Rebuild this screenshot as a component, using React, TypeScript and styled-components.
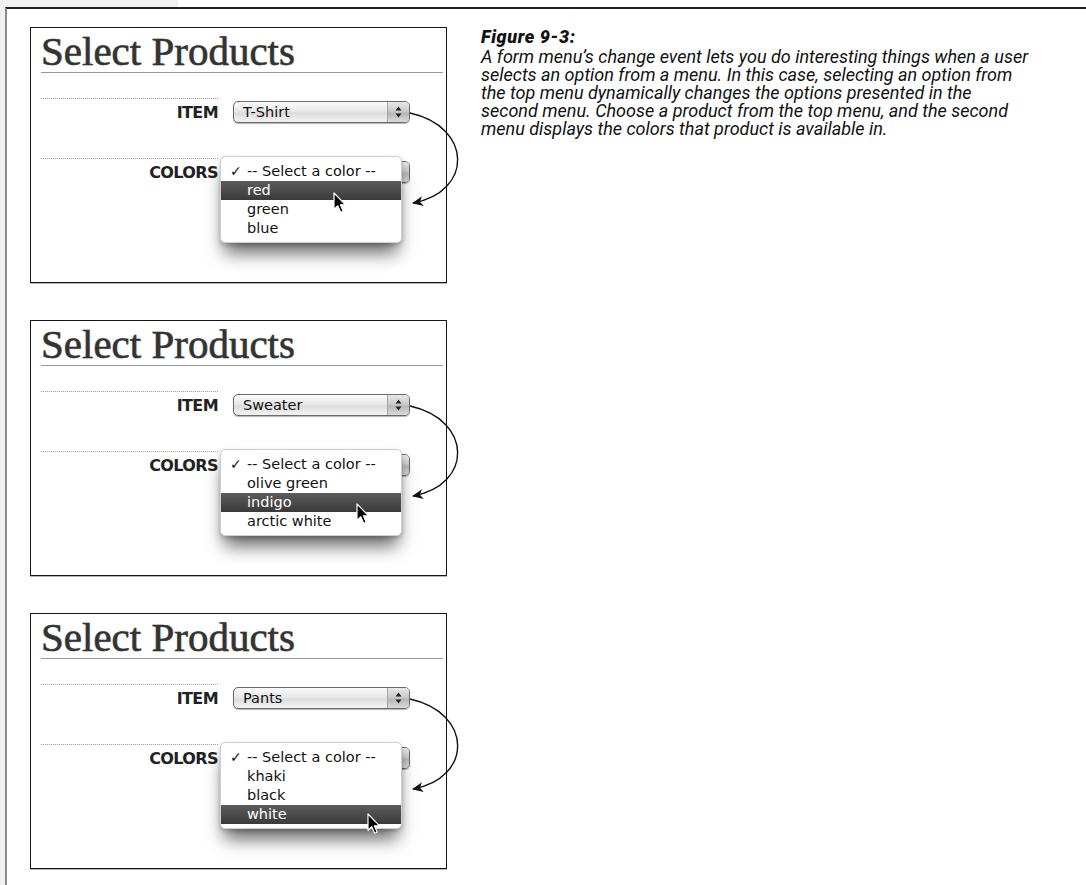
import styled, { createGlobalStyle } from "styled-components"

const GlobalStyle = createGlobalStyle`
  html, body {
    margin: 0;
    padding: 0;
    background: #fff;
  }
  body {
    font-family: "DejaVu Sans", sans-serif;
    color: #111;
  }
`

type Example = {
  item: string
  colors: string[]
  picked: number
  cursor: { x: number; y: number }
}

const examples: Example[] = [
  { item: "T-Shirt", colors: ["red", "green", "blue"], picked: 0, cursor: { x: 112, y: 35 } },
  { item: "Sweater", colors: ["olive green", "indigo", "arctic white"], picked: 1, cursor: { x: 135, y: 53 } },
  { item: "Pants", colors: ["khaki", "black", "white"], picked: 2, cursor: { x: 146, y: 70 } },
]

const Stepper = () => (
  <StepperBox>
    <svg width="7" height="12" viewBox="0 0 7 12">
      <polygon points="3.5,0.5 6.5,4.5 0.5,4.5" fill="#222" />
      <polygon points="0.5,7.5 6.5,7.5 3.5,11.5" fill="#222" />
    </svg>
  </StepperBox>
)

const Pointer = ({ x, y }: { x: number; y: number }) => (
  <Cursor $x={x} $y={y} width="14" height="22" viewBox="0 0 14 22">
    <path
      d="M1 1 L1 17.5 L4.8 13.8 L7.6 20.3 L10.2 19.2 L7.4 12.8 L12.6 12.8 Z"
      fill="#000"
      stroke="#fff"
      strokeWidth="1.2"
      strokeLinejoin="round"
    />
  </Cursor>
)

const Curve = () => (
  <CurveSvg width="1" height="1">
    <defs>
      <marker id="head" markerWidth="12" markerHeight="10" refX="10" refY="5" orient="auto" markerUnits="userSpaceOnUse">
        <path d="M0 0 L11 5 L0 10 L3 5 Z" fill="#111" />
      </marker>
    </defs>
    <path d="M379 85 C442 99 442 164 382 175" fill="none" stroke="#111" strokeWidth="1.4" markerEnd="url(#head)" />
  </CurveSvg>
)

const Shot = ({ ex }: { ex: Example }) => (
  <Panel>
    <Title>Select Products</Title>
    <Rows>
      <Row>
        <Label>ITEM</Label>
        <SelectBox>
          <SelectText>{ex.item}</SelectText>
          <Stepper />
        </SelectBox>
      </Row>
      <Row>
        <Label>COLORS</Label>
        <SelectBox>
          <SelectText />
          <Stepper />
          <Menu>
            <Option $on={false}>
              <Check>✓</Check>-- Select a color --
            </Option>
            {ex.colors.map((c, i) => (
              <Option key={c} $on={i === ex.picked}>
                {c}
              </Option>
            ))}
            <Pointer x={ex.cursor.x} y={ex.cursor.y} />
          </Menu>
        </SelectBox>
      </Row>
    </Rows>
    <Curve />
  </Panel>
)

const App = () => {
  return (
    <Page>
      <GlobalStyle />
      <TopStrip>
        <Tab />
      </TopStrip>
      <Body>
        <Gutter />
        <Frame>
          <Stack>
            {examples.map((ex) => (
              <Shot key={ex.item} ex={ex} />
            ))}
          </Stack>
          <Caption>
            <FigureLabel>Figure 9-3:</FigureLabel>
            <CaptionText>
              A form menu’s change event lets you do interesting things when a user
              <br />
              selects an option from a menu. In this case, selecting an option from
              <br />
              the top menu dynamically changes the options presented in the
              <br />
              second menu. Choose a product from the top menu, and the second
              <br />
              menu displays the colors that product is available in.
            </CaptionText>
          </Caption>
        </Frame>
      </Body>
    </Page>
  )
}

export default App

const Page = styled.div`
  min-height: 100vh;
  display: flex;
  flex-direction: column;
`

const TopStrip = styled.div`
  height: 7px;
  display: flex;
`

const Tab = styled.div`
  width: 178px;
  background: #f0f0f0;
`

const Body = styled.div`
  flex: 1;
  display: flex;
`

const Gutter = styled.div`
  width: 5px;
  background: #f0f0f0;
`

const Frame = styled.div`
  flex: 1;
  display: flex;
  align-items: flex-start;
  border-top: 2px solid #222;
  border-left: 2px solid #8a8a8a;
  padding: 18px 0 0 23px;
`

const Stack = styled.div`
  display: flex;
  flex-direction: column;
  gap: 37px;
  width: 417px;
  flex-shrink: 0;
`

const Panel = styled.div`
  position: relative;
  height: 256px;
  box-sizing: border-box;
  border: 1px solid #151515;
  box-shadow: 0 1px 0 #b5b5b5;
  background: #fff;
  padding: 3px 3px 0 10px;
`

const Title = styled.h2`
  margin: 0;
  font: 400 41px/41px "Liberation Serif", serif;
  color: #333;
  -webkit-text-stroke: 0.5px #333;
  text-shadow: 0 0 1.5px rgba(0, 0, 0, 0.35);
  border-bottom: 1px solid #999;
`

const Rows = styled.div`
  margin-top: 25px;
`

const Row = styled.div`
  display: flex;
  gap: 15px;
  height: 60px;
`

const Label = styled.div`
  width: 177px;
  box-sizing: border-box;
  border-top: 1px dotted #999;
  padding-top: 5px;
  text-align: right;
  font: 700 16px/18px "DejaVu Sans", sans-serif;
  letter-spacing: -0.6px;
  color: #222;
`

const SelectBox = styled.div`
  position: relative;
  margin-top: 3px;
  width: 177px;
  height: 22px;
  box-sizing: border-box;
  display: flex;
  border: 1px solid #6a6a6a;
  border-radius: 5px;
  background: linear-gradient(#fafafa, #e8e8e8 45%, #dcdcdc 55%, #f3f3f3);
  box-shadow: 0 1px 1px rgba(0, 0, 0, 0.3);
`

const SelectText = styled.div`
  flex: 1;
  padding-left: 9px;
  font: 14.5px/20px "DejaVu Sans", sans-serif;
  color: #111;
`

const StepperBox = styled.div`
  width: 21px;
  display: flex;
  align-items: center;
  justify-content: center;
  border-left: 1px solid #a5a5a5;
  border-radius: 0 4px 4px 0;
  background: linear-gradient(#e8e8e8, #c6c6c6 50%, #b5b5b5 55%, #dadada);
`

const Menu = styled.div`
  position: absolute;
  left: -14px;
  top: -6px;
  width: 182px;
  box-sizing: border-box;
  padding: 5px 0 4px;
  background: #fff;
  border: 1px solid #cfcfcf;
  border-radius: 5px;
  box-shadow: 0 14px 18px -4px rgba(0, 0, 0, 0.6), 0 2px 4px rgba(0, 0, 0, 0.2);
  z-index: 2;
`

const Option = styled.div<{ $on: boolean }>`
  position: relative;
  height: 19px;
  padding-left: 26px;
  font: 14.5px/19px "DejaVu Sans", sans-serif;
  color: ${(p) => (p.$on ? "#fff" : "#111")};
  background: ${(p) => (p.$on ? "linear-gradient(#5c5c5c, #3a3a3a)" : "transparent")};
  white-space: nowrap;
`

const Check = styled.span`
  position: absolute;
  left: 9px;
  font-size: 14px;
`

const Cursor = styled.svg<{ $x: number; $y: number }>`
  position: absolute;
  left: ${(p) => p.$x}px;
  top: ${(p) => p.$y}px;
  z-index: 3;
`

const CurveSvg = styled.svg`
  position: absolute;
  left: 0;
  top: 0;
  overflow: visible;
  pointer-events: none;
  z-index: 4;
`

const Caption = styled.div`
  margin-left: 34px;
  font-family: Roboto, "Liberation Sans", sans-serif;
  font-style: italic;
  color: #111;
  white-space: nowrap;
`

const FigureLabel = styled.div`
  font-size: 18px;
  line-height: 20px;
  font-weight: 900;
  letter-spacing: 0.6px;
`

const CaptionText = styled.div`
  font-size: 18px;
  line-height: 18px;
  padding-top: 1px;
`
